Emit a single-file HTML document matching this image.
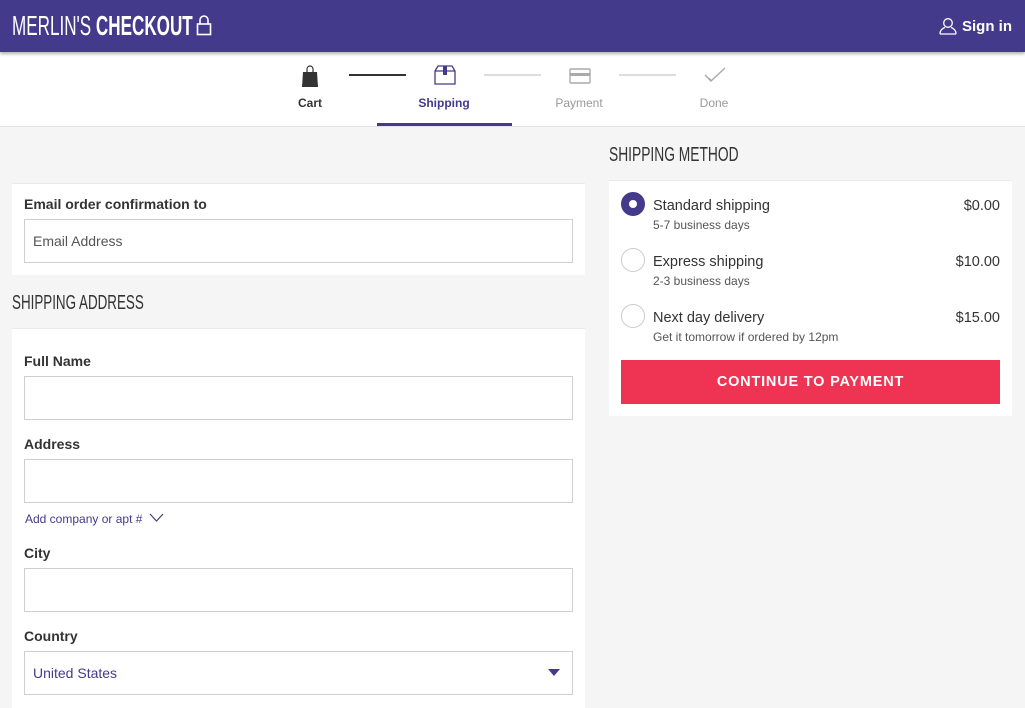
<!DOCTYPE html>
<html><head><style>
*{box-sizing:border-box;margin:0;padding:0}
body{width:1025px;height:702px;overflow:hidden;background:#f5f5f5;font-family:"Liberation Sans",sans-serif;color:#333;position:relative}
.a{position:absolute}
.hdr{left:0;top:0;width:1025px;height:52px;background:#433a8c;box-shadow:0 2px 3px rgba(0,0,0,.3);z-index:2}
.cond{font-family:"Liberation Sans Narrow","Liberation Sans",sans-serif;display:inline-block;transform-origin:left center;white-space:nowrap}
.steps{left:0;top:52px;width:1025px;height:75px;background:#fff;border-bottom:1px solid #e3e3e3}
.lbl{font-size:12px;font-weight:bold;text-align:center;width:100px}
.card{background:#fff;border-top:1px solid #eaeaea}
.fl{font-size:14px;font-weight:bold;color:#333}
.in{border:1px solid #cfcfcf;background:#fff;width:549px;height:44px;left:24px}
.h2{font-size:20px;color:#333}
.rad{width:24px;height:24px;border-radius:50%;border:1px solid #ccc;background:#fff;left:621px}
.t{font-size:14.5px;color:#333;left:653px}
.s{font-size:12px;color:#555;left:653px}
.p{font-size:14.5px;color:#333;right:25px}
</style></head><body>
<div class="a hdr">
 <div class="a" style="left:12px;top:10px;color:#fff;font-size:28px;white-space:nowrap"><span class="cond" style="transform:scaleX(.61)">MERLIN'S <b>CHECKOUT</b></span></div>
 <svg class="a" style="left:196px;top:15px" width="16" height="21" viewBox="0 0 16 21"><path d="M4 9V5a4 4 0 0 1 8 0v4" fill="none" stroke="#fff" stroke-width="1.6"/><rect x="1.5" y="9" width="13" height="10.5" fill="none" stroke="#fff" stroke-width="1.6"/></svg>
 <svg class="a" style="left:939px;top:17px" width="18" height="18" viewBox="0 0 18 18"><circle cx="9" cy="6" r="4.3" fill="none" stroke="#fff" stroke-width="1.3"/><path d="M1 17c0-4 3-6 5-6.5M17 17c0-4-3-6-5-6.5M1 17h16" fill="none" stroke="#fff" stroke-width="1.3"/></svg>
 <div class="a" style="left:962px;top:18px;color:#fff;font-size:15px;font-weight:bold">Sign in</div>
</div>
<div class="a steps">
 <svg class="a" style="left:301px;top:13px" width="18" height="22" viewBox="0 0 18 22"><path d="M6 7V4a3 3 0 0 1 6 0v3" fill="none" stroke="#333" stroke-width="1.2"/><path d="M2 7h14l1 15H1z" fill="#333"/></svg>
 <div class="a" style="left:349px;top:22px;width:57px;height:2px;background:#333"></div>
 <svg class="a" style="left:434px;top:13px" width="22" height="20" viewBox="0 0 22 20"><path d="M1 6L4 1h14l3 5v13H1z M1 6h20" fill="none" stroke="#433a8c" stroke-width="1.3"/><rect x="9" y="1" width="4" height="9" fill="#433a8c"/></svg>
 <div class="a" style="left:484px;top:22px;width:57px;height:2px;background:#ddd"></div>
 <svg class="a" style="left:569px;top:16px" width="22" height="16" viewBox="0 0 22 16"><rect x="1" y="1" width="20" height="14" rx="1" fill="none" stroke="#aaa" stroke-width="1.4"/><rect x="1" y="5" width="20" height="3" fill="#aaa"/></svg>
 <div class="a" style="left:619px;top:22px;width:57px;height:2px;background:#ddd"></div>
 <svg class="a" style="left:704px;top:15px" width="22" height="16" viewBox="0 0 22 16"><path d="M1 8l6 6L21 1" fill="none" stroke="#aaa" stroke-width="1.4"/><path d="M8 14l-3-3" stroke="#aaa"/></svg>
 <div class="a lbl" style="left:260px;top:44px;color:#333">Cart</div>
 <div class="a lbl" style="left:394px;top:44px;color:#433a8c">Shipping</div>
 <div class="a lbl" style="left:529px;top:44px;color:#999;font-weight:normal">Payment</div>
 <div class="a lbl" style="left:664px;top:44px;color:#999;font-weight:normal">Done</div>
 <div class="a" style="left:377px;top:71px;width:135px;height:3px;background:#433a8c"></div>
</div>

<div class="a card" style="left:12px;top:183px;width:573px;height:92px"></div>
<div class="a fl" style="left:24px;top:196px">Email order confirmation to</div>
<div class="a in" style="top:219px"><div style="padding:13px 8px;font-size:14px;color:#555">Email Address</div></div>

<div class="a h2" style="left:12px;top:292px"><span class="cond" style="transform:scaleX(.67)">SHIPPING ADDRESS</span></div>
<div class="a card" style="left:12px;top:328px;width:573px;height:380px"></div>
<div class="a fl" style="left:24px;top:353px">Full Name</div>
<div class="a in" style="top:376px"></div>
<div class="a fl" style="left:24px;top:436px">Address</div>
<div class="a in" style="top:459px"></div>
<div class="a" style="left:25px;top:512px;font-size:12px;color:#433a8c">Add company or apt #</div>
<svg class="a" style="left:149px;top:513px" width="15" height="10" viewBox="0 0 15 10"><path d="M1 1l6.5 7L14 1" fill="none" stroke="#433a8c" stroke-width="1.2"/></svg>
<div class="a fl" style="left:24px;top:545px">City</div>
<div class="a in" style="top:568px"></div>
<div class="a fl" style="left:24px;top:628px">Country</div>
<div class="a in" style="top:651px"><div style="padding:13px 8px;font-size:14px;color:#433a8c">United States</div></div>
<svg class="a" style="left:548px;top:669px" width="12" height="8" viewBox="0 0 12 8"><path d="M0 0h12L6 7z" fill="#433a8c"/></svg>

<div class="a h2" style="left:609px;top:144px"><span class="cond" style="transform:scaleX(.69)">SHIPPING METHOD</span></div>
<div class="a card" style="left:609px;top:180px;width:403px;height:236px"></div>
<div class="a rad" style="top:192px;background:#433a8c;border-color:#433a8c"><div style="width:8px;height:8px;border-radius:50%;background:#fff;margin:7px"></div></div>
<div class="a t" style="top:198px">Standard shipping</div>
<div class="a s" style="top:218px">5-7 business days</div>
<div class="a p" style="top:198px;right:25px">$0.00</div>
<div class="a rad" style="top:248px"></div>
<div class="a t" style="top:254px">Express shipping</div>
<div class="a s" style="top:274px">2-3 business days</div>
<div class="a p" style="top:254px">$10.00</div>
<div class="a rad" style="top:304px"></div>
<div class="a t" style="top:310px">Next day delivery</div>
<div class="a s" style="top:330px">Get it tomorrow if ordered by 12pm</div>
<div class="a p" style="top:310px">$15.00</div>
<div class="a" style="left:621px;top:360px;width:379px;height:44px;background:#ee3452;color:#fff;font-size:14.5px;font-weight:bold;text-align:center;line-height:44px;letter-spacing:.8px">CONTINUE TO PAYMENT</div>
</body></html>
